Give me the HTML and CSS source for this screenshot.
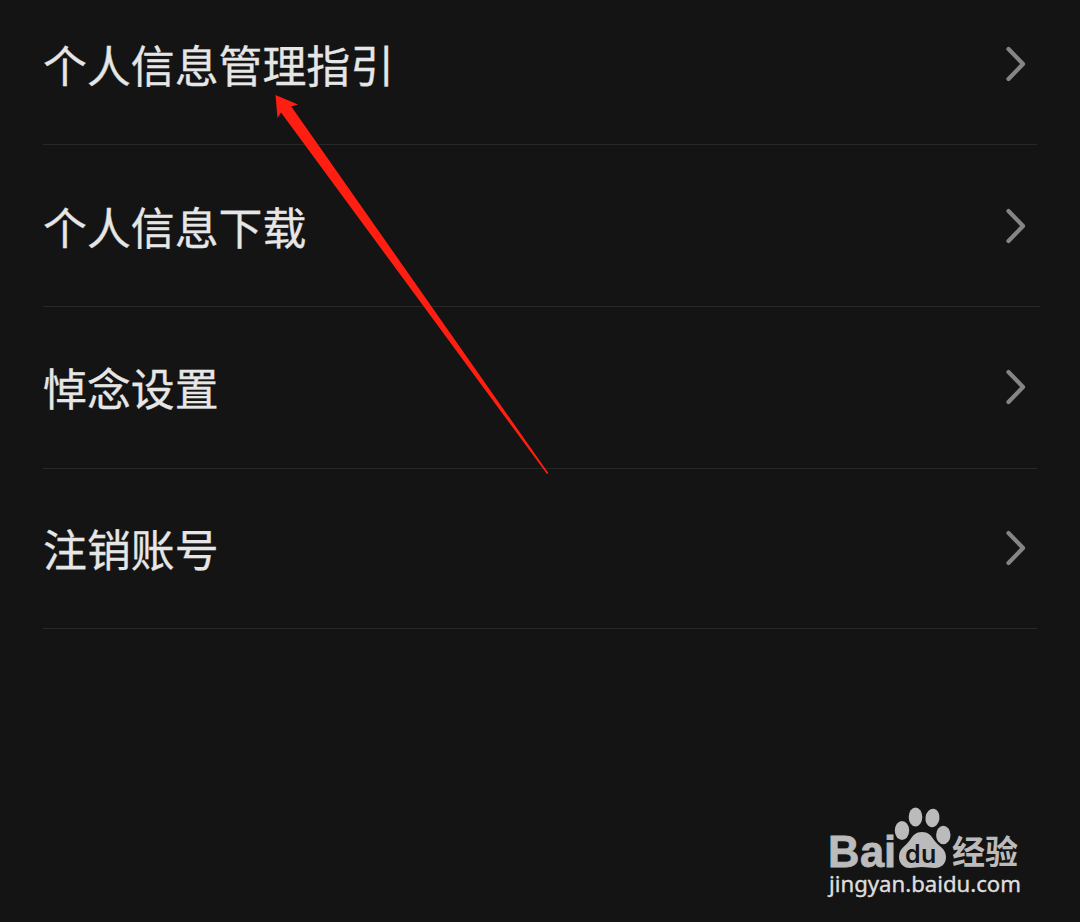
FILE: index.html
```html
<!DOCTYPE html>
<html lang="zh-CN">
<head>
    <meta charset="UTF-8">
    <meta name="viewport" content="width=device-width, initial-scale=1.0">
    <title>个人信息管理</title>
    <link rel="stylesheet" href="styles.css">
</head>
<body>
    <div class="menu">
        <div class="row">
            <span class="label">个人信息管理指引</span>
            <svg class="chevron" viewBox="0 0 22 38"><path d="M3.5 4 L18 19 L3.5 34"/></svg>
        </div>
        <div class="row wide">
            <span class="label">个人信息下载</span>
            <svg class="chevron" viewBox="0 0 22 38"><path d="M3.5 4 L18 19 L3.5 34"/></svg>
        </div>
        <div class="row lower">
            <span class="label">悼念设置</span>
            <svg class="chevron" viewBox="0 0 22 38"><path d="M3.5 4 L18 19 L3.5 34"/></svg>
        </div>
        <div class="row lower last">
            <span class="label">注销账号</span>
            <svg class="chevron" viewBox="0 0 22 38"><path d="M3.5 4 L18 19 L3.5 34"/></svg>
        </div>
    </div>

    <!-- red pointer over the first item -->
    <svg class="arrow" viewBox="0 0 274 380">
        <path d="M0.5 0 L23 9.5 L16.3 11.5 L273.3 378 L272 379 L6 17.5 L2.5 23 Z"/>
    </svg>

    <svg class="watermark" viewBox="820 795 215 115">
        <text class="bai" x="828 860 884" y="866.5">Bai</text>
        <g class="paw">
            <ellipse cx="902" cy="830.5" rx="7.2" ry="9.5"/>
            <ellipse cx="915.5" cy="817" rx="6.8" ry="9.5"/>
            <ellipse cx="932.5" cy="818" rx="7" ry="9.3" transform="rotate(8 932.5 818)"/>
            <ellipse cx="943.3" cy="835" rx="7.2" ry="9.2"/>
            <path d="M922 832 C928 832 931 835 934 840 C938 846 946 848 946 857 C946 864 941 868 935 868 C930 868 927 867 922 867 C917 867 915 868 910 868 C903 868 899 863 899 857 C899 848 906 846 910 840 C913 835 916 832 922 832 Z"/>
        </g>
        <text class="du" x="905 921" y="862.5">du</text>
        <text class="jingyan" x="952" y="863.5" textLength="66" lengthAdjust="spacingAndGlyphs">经验</text>
        <text class="url" x="829" y="892" textLength="192" lengthAdjust="spacingAndGlyphs">jingyan.baidu.com</text>
    </svg>
</body>
</html>
```
FILE: styles.css
```css
body {
    margin: 0;
    height: 922px;
    overflow: hidden;
    background-color: #141414;
    color: #e6e6e6;
    font-family: "Noto Sans CJK SC", sans-serif;
}
/* first row is partly scrolled off the top */
.menu {
    display: flow-root;
    padding: 0 43px;
    margin-top: -17px;
}
.row {
    box-sizing: border-box;
    display: flex;
    align-items: center;
    justify-content: space-between;
    height: 162px;
    padding-right: 10px;
    border-bottom: 1px solid #282828;
}
.wide {
    margin-right: -3px;
    padding-right: 13px;
}
.lower { padding-bottom: 2px; }
.last { height: 160px; }
.label {
    font-size: 43.9px;
    line-height: 60px;
    -webkit-text-stroke: 0.3px #e6e6e6;
}
.chevron {
    width: 22px;
    height: 38px;
}
.chevron path {
    fill: none;
    stroke: #858585;
    stroke-width: 4.2;
    stroke-linecap: round;
    stroke-linejoin: round;
}
.arrow {
    position: absolute;
    left: 275px;
    top: 95px;
    width: 274px;
    height: 380px;
    fill: #ff1f12;
}
.watermark {
    position: absolute;
    left: 820px;
    top: 795px;
    width: 215px;
    height: 115px;
    fill: #bbbbbb;
}
.bai {
    font: bold 43.5px "Liberation Sans", sans-serif;
    stroke: #bbbbbb;
    stroke-width: 0.8;
}
.du {
    font: 600 25px Inter, sans-serif;
    fill: #141414;
}
.jingyan {
    font: bold 33px "Noto Sans CJK SC", sans-serif;
}
.url {
    font: 22px "Noto Sans", sans-serif;
    fill: #dddddd;
    stroke: #dddddd;
    stroke-width: 0.4;
}
```
